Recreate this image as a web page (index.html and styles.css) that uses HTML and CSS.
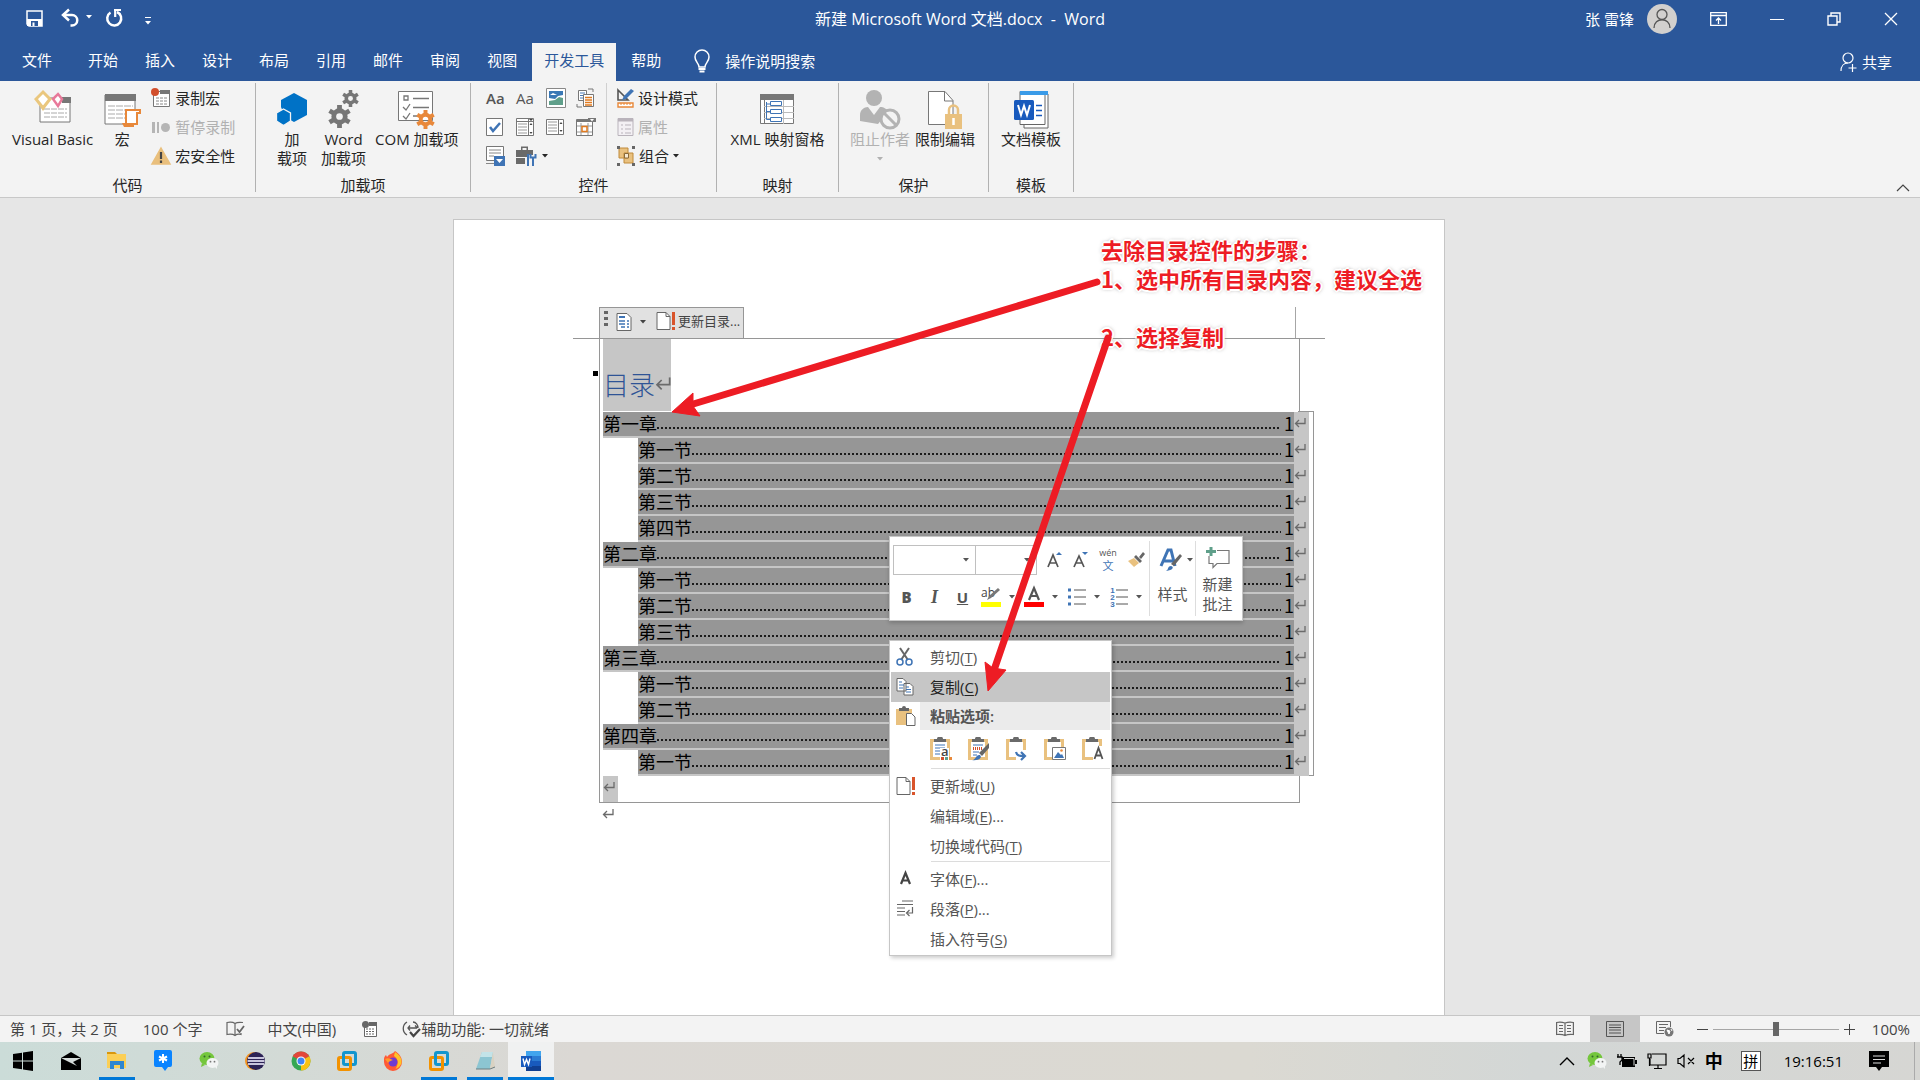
FILE: index.html
```html
<!DOCTYPE html>
<html lang="zh-CN">
<head>
<meta charset="utf-8">
<title>新建 Microsoft Word 文档.docx - Word</title>
<link rel="stylesheet" href="styles.css">
</head>
<body>
<svg class="defs" width="0" height="0" aria-hidden="true">
  <symbol id="caret" viewBox="0 0 6 4"><path d="M0 0h6L3 3.5z" fill="currentColor"/></symbol>
  <symbol id="ret" viewBox="0 0 12 10"><path d="M11 0v5.500H1.500M5 2L1.500 5.500 5 9" fill="none" stroke="#6b6b6b" stroke-width="1.300"/></symbol>
  <symbol id="clip" viewBox="0 0 22 24"><path d="M1.500 3.500h17v18h-17z" fill="#fff" stroke="#e9c17f" stroke-width="3"/><path d="M4 5V2h3a3 2.500 0 0 1 6 0h3v3z" fill="#6a6a6a"/></symbol>
  <symbol id="vm" viewBox="0 0 20 20"><rect x="6.500" y="1.500" width="12" height="12" rx="1.500" fill="none" stroke="#1296cf" stroke-width="3"/><rect x="1.500" y="6.500" width="12" height="12" rx="1.500" fill="none" stroke="#f39200" stroke-width="3"/><path d="M6.500 8V3" stroke="#1296cf" stroke-width="3"/></symbol>
  <symbol id="wechat" viewBox="0 0 20 20"><ellipse cx="8" cy="7.500" rx="7.500" ry="6.500" fill="#74c63c"/><path d="M3 12l-1 4 4-2z" fill="#74c63c"/><circle cx="5.500" cy="5.500" r="1" fill="#35682b"/><circle cx="10.500" cy="5.500" r="1" fill="#35682b"/><ellipse cx="13.500" cy="12" rx="6" ry="5" fill="#f2f4f4"/><path d="M16 16l2 2 0-4z" fill="#f2f4f4"/><circle cx="11.500" cy="10.700" r=".9" fill="#777"/><circle cx="15.500" cy="10.700" r=".9" fill="#777"/></symbol>
  <symbol id="gear" viewBox="-12 -12 24 24"><circle r="6" fill="none" stroke="currentColor" stroke-width="5"/><path d="M0-12v5M0 12V7M10.400-6l-4 2.300M-10.400 6l4-2.300M-10.400-6l4 2.300M10.400 6l-4-2.300" stroke="currentColor" stroke-width="5"/></symbol>
</svg>

<header class="top">
  <div class="titlebar">
    <div class="quick">
      <button aria-label="保存"><svg width="17" height="17" viewBox="0 0 17 17"><path d="M1 1h15v15H3l-2-2z" fill="none" stroke="#fff" stroke-width="1.500"/><path d="M1 9h15v7H1z" fill="#fff"/><path d="M5 11h7v5H5z" fill="#2b579a"/><path d="M6.500 12.500h2V16h-2z" fill="#fff"/></svg></button>
      <button class="undo" aria-label="撤消"><svg width="19" height="18" viewBox="0 0 19 18"><path d="M2 6h9a5 5 0 0 1 0 10.500H9.500" fill="none" stroke="#fff" stroke-width="2.500"/><path d="M8 .5L2 6l6 5.500" fill="none" stroke="#fff" stroke-width="2.500"/></svg><svg width="6" height="4"><use href="#caret"/></svg></button>
      <button aria-label="重复"><svg width="18" height="18" viewBox="0 0 18 18"><path d="M5.500 3.500A7 7 0 1 0 12 3" fill="none" stroke="#fff" stroke-width="2.500"/><path d="M9 1h7M10.200 0v8" fill="none" stroke="#fff" stroke-width="2.200"/></svg></button>
      <button class="custom" aria-label="自定义快速访问工具栏"><svg width="6" height="8" viewBox="0 0 6 8"><path d="M0 .5h6" stroke="#fff"/><path d="M0 4h6L3 7.500z" fill="#fff"/></svg></button>
    </div>
    <h1>新建 Microsoft Word 文档.docx&nbsp; -&nbsp; Word</h1>
    <div class="window">
      <span class="user">张 雷锋</span>
      <svg class="avatar" width="30" height="30" viewBox="0 0 30 30"><circle cx="15" cy="15" r="15" fill="#d2d0ce"/><circle cx="15" cy="10.500" r="5" fill="none" stroke="#555" stroke-width="1.300"/><path d="M7 24c0-11 16-11 16 0" fill="none" stroke="#555" stroke-width="1.300"/></svg>
      <button aria-label="功能区显示选项"><svg width="17" height="14" viewBox="0 0 17 14"><path d="M.7.700h15.600v12.600H.7zM1 3.500h15M8.500 12V6M6 8.500L8.500 6 11 8.500" fill="none" stroke="#fff" stroke-width="1.300"/></svg></button>
      <button aria-label="最小化"><svg width="14" height="14"><path d="M0 7.500h14" stroke="#fff"/></svg></button>
      <button aria-label="向下还原"><svg width="14" height="14" viewBox="0 0 14 14"><path d="M1 4h9v9H1zM4 4V1h9v9h-3" fill="none" stroke="#fff" stroke-width="1.400"/></svg></button>
      <button aria-label="关闭"><svg width="14" height="14" viewBox="0 0 14 14"><path d="M1 1l12 12M13 1L1 13" stroke="#fff" stroke-width="1.300"/></svg></button>
    </div>
  </div>
  <nav class="tabs">
    <button class="file">文件</button>
    <button>开始</button><button>插入</button><button>设计</button><button>布局</button><button>引用</button><button>邮件</button><button>审阅</button><button>视图</button><button class="active">开发工具</button><button>帮助</button>
    <button class="tell"><svg width="16" height="24" viewBox="0 0 16 24"><path d="M5 18c0-4-4-5-4-10a7 7 0 0 1 14 0c0 5-4 6-4 10z" fill="none" stroke="#fff" stroke-width="1.500"/><path d="M4.500 20h7M5.500 22.500h5" stroke="#fff" stroke-width="1.800"/></svg>操作说明搜索</button>
    <button class="share"><svg width="18" height="20" viewBox="0 0 18 20"><circle cx="8" cy="6" r="5" fill="none" stroke="#fff" stroke-width="1.200"/><path d="M1 19c0-5 3-8 7-8M12.500 12v8M8.500 16h8" fill="none" stroke="#fff" stroke-width="1.200"/></svg>共享</button>
  </nav>
</header>

<section class="ribbon">
  <div class="group g-code">
    <div class="items">
      <button class="big"><svg width="38" height="40" viewBox="0 0 38 40"><path d="M6 8h30v24H6z" fill="#fff" stroke="#777"/><path d="M28 7h9v6h-9z" fill="#777"/><path d="M10 19h23M10 23h23M10 27h23" stroke="#aaa" stroke-dasharray="6 1"/><path d="M9 2l7 7-7 9-7-9z" fill="#fff" stroke="#eac77e" stroke-width="3"/><path d="M2 9l7 12 7-12-7 7z" fill="#eac77e"/><path d="M24 4l4 5-4 7-5-7z" fill="#fff" stroke="#e8799a" stroke-width="2.500"/></svg>Visual Basic</button>
      <button class="big w40"><svg width="38" height="40" viewBox="0 0 38 40"><path d="M2 5h30v29H2z" fill="#fff" stroke="#777"/><path d="M2 4h31v7H2z" fill="#777"/><path d="M5 16h25M5 20h25M5 24h18M5 28h18" stroke="#aaa" stroke-dasharray="7 1"/><path d="M23 20h14v3h-3v11H23z" fill="#fff" stroke="#e8883a" stroke-width="2"/><path d="M19 33h12v4H21z" fill="#e8883a"/></svg>宏</button>
      <div class="list">
        <button><svg width="20" height="20" viewBox="0 0 20 20"><path d="M2.500 3.500h16v15h-16z" fill="#fff" stroke="#777"/><path d="M9 2h10v4H9z" fill="#777"/><path d="M5 10h11M5 13h11M5 16h11" stroke="#888" stroke-dasharray="3 1"/><circle cx="4" cy="4" r="4" fill="#d24f2c"/></svg>录制宏</button>
        <button disabled><svg width="20" height="20" viewBox="0 0 20 20"><path d="M1 5h3v11H1zM6 5h2v11H6z" fill="#b5b5b5"/><circle cx="14.500" cy="10.500" r="4.500" fill="#b5b5b5"/></svg>暂停录制</button>
        <button><svg width="20" height="20" viewBox="0 0 20 20"><path d="M10 2l9 16H1z" fill="#e9bf7c" stroke="#e9bf7c" stroke-width="1.500"/><path d="M10 6v7M10 14.500V17" stroke="#444" stroke-width="2.200"/></svg>宏安全性</button>
      </div>
    </div>
    <h2>代码</h2>
  </div>
  <div class="group g-addin">
    <div class="items">
      <button class="big w40"><svg width="32" height="40" viewBox="0 0 32 40"><path d="M18 3l13 7v15l-13 7-9-5-4-10V10z" fill="#0072c6"/><path d="M7.500 19l7 4v8l-7 4.500-7-4.500v-8z" fill="#0072c6" stroke="#f3f3f3" stroke-width="1.300"/></svg>加<br>载项</button>
      <button class="big"><svg width="34" height="40" viewBox="0 0 34 40"><g color="#767676"><use href="#gear" x="15" y="0" width="17" height="17"/><use href="#gear" x="1" y="15" width="23" height="23"/></g></svg>Word<br>加载项</button>
      <button class="big"><svg width="38" height="40" viewBox="0 0 38 40"><path d="M.5 1.500h34v29H.5z" fill="#fff" stroke="#777"/><path d="M6 6h4v4H6zM15 8.500h16M5 17l3 3 4-6M15 17.500h16M5 26l3 3 4-6M15 26h6" fill="none" stroke="#777" stroke-width="1.300"/><use href="#gear" x="18" y="20" width="19" height="19" color="#e8883a"/></svg>COM 加载项</button>
    </div>
    <h2>加载项</h2>
  </div>
  <div class="group g-ctl">
    <div class="items">
      <div class="grid">
        <button class="aa bold">Aa</button><button class="aa">Aa</button>
        <button aria-label="图片"><svg width="20" height="20" viewBox="0 0 20 20"><path d="M.5.500h19v19H.5z" fill="#fff" stroke="#888"/><path d="M3 3h14v4l-5 1-3 3-6-1z" fill="#3a78b5"/><path d="M3 17v-4l6-1 4-3 4 1v7z" fill="#5f9f8a"/><path d="M4 7l3-2 4 2z" fill="#fff"/></svg></button>
        <button aria-label="构建基块"><svg width="20" height="22" viewBox="0 0 20 22"><path d="M2.500 3.500h8v10h-8z" fill="#fff" stroke="#777"/><path d="M4 6h5M4 8.500h5M4 11h4" stroke="#4a7ab5"/><path d="M7.500 7.500h10v12h-10z" fill="#fff" stroke="#777"/><path d="M9 10.500h7M9 13h7M9 15.500h7M9 18h7" stroke="#e07a1f" stroke-width="1.400"/><path d="M12 2h5v3M1 17v3h5" fill="none" stroke="#777"/></svg></button>
        <button aria-label="复选框"><svg width="18" height="20" viewBox="0 0 18 20"><path d="M.5 1.500h16v17H.5z" fill="#fff" stroke="#777"/><path d="M4 10l3 4 7-8" fill="none" stroke="#3f74b5" stroke-width="2.500"/></svg></button>
        <button aria-label="组合框"><svg width="18" height="20" viewBox="0 0 18 20"><path d="M.5 1.500h17v17H.5zM12.500 1v18M.5 4.500h17" fill="#fff" stroke="#777"/><path d="M2 7h9M2 10h9M2 13h9M2 16h9" stroke="#999"/><path d="M13 2h4l-2 2zM13.500 8h3L15 6zM13.500 15h3L15 17z" fill="#444"/></svg></button>
        <button aria-label="下拉列表"><svg width="18" height="20" viewBox="0 0 18 20"><path d="M.5 2.500h17v15H.5zM12.500 2v16" fill="#fff" stroke="#777"/><path d="M2 5h9M2 8h9M2 11h9M2 14h9" stroke="#999"/><path d="M13.500 7h3L15 5zM13.500 13h3L15 15z" fill="#444"/></svg></button>
        <button aria-label="日期选取器"><svg width="20" height="20" viewBox="0 0 20 20"><path d="M.5 2.500h16v16H.5z" fill="#fff" stroke="#777"/><path d="M.5 4h16" stroke="#777" stroke-width="2"/><path d="M12 1h8v4h-8z" fill="#777"/><path d="M14 2h4l-2 2.500z" fill="#fff"/><path d="M1 9h15M1 15h15M5 6v12M12 6v12" stroke="#999"/><path d="M6 9.500h5v5H6z" fill="#fff" stroke="#e07a1f" stroke-width="1.500"/></svg></button>
        <button aria-label="重复分区"><svg width="20" height="22" viewBox="0 0 20 22"><path d="M.5 1.500h17v14H.5z" fill="#fff" stroke="#777"/><path d="M3 5h12M3 8h12M3 11h5M0 18.500h8" stroke="#888"/><path d="M8 11h11v10H8z" fill="#3f74b5"/><path d="M10 14h7l-3.500 4z" fill="#fff"/></svg></button>
        <button class="drop" aria-label="旧式工具"><svg width="20" height="22" viewBox="0 0 20 22"><path d="M0 5h17v5h-6v2H0zM0 13h9v6H0zM5 5V1.500h7V5h-1.500V3h-4v2z" fill="#6a6a6a"/><path d="M12 9v12M17 13v8M14.500 9v3.500h5V9" fill="none" stroke="#3f74b5" stroke-width="2"/></svg><svg width="6" height="4"><use href="#caret"/></svg></button>
      </div>
      <div class="list divided">
        <button><svg width="17" height="20" viewBox="0 0 17 20"><path d="M1 2l10 10H1z" fill="none" stroke="#555" stroke-width="1.600"/><path d="M5 12l2-4 7-7 3 2-8 8z" fill="#3f74b5"/><path d="M1 15h15v4H1z" fill="#fff" stroke="#e8883a" stroke-width="1.400"/><path d="M4 15v2M7 15v2M10 15v2M13 15v2" stroke="#e8883a"/></svg>设计模式</button>
        <button disabled><svg width="17" height="20" viewBox="0 0 17 20"><path d="M1 1.500h15v17H1z" fill="#f3f0f4" stroke="#b9b3bb"/><path d="M1 3h15" stroke="#b9b3bb" stroke-width="3"/><path d="M4 8h2M4 12h2M4 16h2M8 8h6M8 12h6M8 16h6" stroke="#b9b3bb"/></svg>属性</button>
        <button><svg width="18" height="20" viewBox="0 0 18 20"><path d="M2 2h9v10H2zM7 7h9v10H7z" fill="#e9c17f" stroke="#c08a3a"/><path d="M7.500 7.500h4v4.500h-4z" fill="#f7ead2" stroke="#8a6a3a"/><path d="M0 0h3v3H0zM15 0h3v3h-3zM0 17h3v3H0zM15 17h3v3h-3z" fill="#666"/></svg>组合<svg width="6" height="4"><use href="#caret"/></svg></button>
      </div>
    </div>
    <h2>控件</h2>
  </div>
  <div class="group g-xml">
    <div class="items"><button class="big"><svg width="36" height="40" viewBox="0 0 36 40"><path d="M1.500 4.500h33v29h-33z" fill="#fff" stroke="#777"/><path d="M1 4h34v6H1z" fill="#777"/><path d="M5.500 4v30" stroke="#777"/><path d="M24.500 10v24M5 16.500h30M5 22.500h30M5 28.500h30" stroke="#bbb"/><path d="M7.500 12v17.500H11M7.500 14h4M7.500 21.500h4" fill="none" stroke="#3f74b5"/><path d="M11.500 11.500h11v4h-11zM11.500 19.500h11v4h-11zM11.500 27.500h11v4h-11z" fill="#fff" stroke="#3f74b5"/></svg>XML 映射窗格</button></div>
    <h2>映射</h2>
  </div>
  <div class="group g-protect">
    <div class="items">
      <button class="big" disabled><svg width="42" height="40" viewBox="0 0 42 40"><ellipse cx="15" cy="8" rx="8" ry="8" fill="#b3b3b3"/><path d="M1 31V25c0-5 4-8 8-8l6 8 6-8c4 0 7 2 8 5l-10 12z" fill="#b3b3b3"/><circle cx="31" cy="29" r="9" fill="#f3f3f3" stroke="#b3b3b3" stroke-width="3"/><path d="M25 23l12 12" stroke="#b3b3b3" stroke-width="3"/></svg>阻止作者<span><svg width="6" height="4"><use href="#caret"/></svg></span></button>
      <button class="big"><svg width="36" height="40" viewBox="0 0 36 40"><path d="M1.500 1.500H18l8 9v24h-24.500z" fill="#fff" stroke="#777"/><path d="M17.500 1.500V11H26" fill="none" stroke="#777"/><path d="M22 24v-4a4.500 4.500 0 0 1 9 0v4" fill="none" stroke="#e9c17f" stroke-width="2.500"/><path d="M18 24h17v15H18z" fill="#e9c17f"/><path d="M26.500 28v7" stroke="#fff" stroke-width="2.500"/></svg>限制编辑</button>
    </div>
    <h2>保护</h2>
  </div>
  <div class="group g-tpl">
    <div class="items"><button class="big"><svg width="36" height="40" viewBox="0 0 36 40"><path d="M11 4h24v34H11z" fill="#fff" stroke="#666"/><path d="M7 1.500h25v33H7z" fill="#fff" stroke="#666"/><path d="M7 1h28v4H7z" fill="#3a9be8"/><path d="M23 15.500h6M23 20.500h6M23 25.500h6" stroke="#185abd" stroke-width="1.500"/><rect x="1" y="10" width="20" height="20" rx="1.500" fill="#185abd"/><path d="M5 15l3 10 3-9 3 9 3-10" fill="none" stroke="#fff" stroke-width="2"/></svg>文档模板</button></div>
    <h2>模板</h2>
  </div>
  <button class="collapse" aria-label="折叠功能区"><svg width="14" height="8" viewBox="0 0 14 8"><path d="M1 7l6-6 6 6" fill="none" stroke="#444" stroke-width="1.200"/></svg></button>
</section>

<main class="canvas">
  <article class="paper">
    <div class="margin-line">
      <div class="toc-bar">
        <svg width="4" height="16" viewBox="0 0 4 16"><path d="M0 0h4v3H0zM0 6h4v3H0zM0 12h4v3H0z" fill="#666"/></svg>
        <button aria-label="目录"><svg width="16" height="20" viewBox="0 0 16 20"><path d="M1 1.500h10l4 4v13H1z" fill="#fff" stroke="#666"/><path d="M3 5h6" stroke="#3f74b5" stroke-width="2"/><path d="M3 9h6M3 12h6M5 15h4M11 9h2M11 12h2M11 15h2" stroke="#3f74b5" stroke-width="1.300"/></svg><svg width="6" height="4"><use href="#caret"/></svg></button>
        <button class="upd"><svg width="20" height="20" viewBox="0 0 20 20"><path d="M1 1.500h9l4 4v13H1z" fill="#fff" stroke="#666"/><path d="M10 1.500v4h4" fill="none" stroke="#666"/><path d="M16 1h3v13h-3zM16 16h3v3h-3z" fill="#d9542b"/></svg>更新目录...</button>
      </div>
      <i class="corner"></i>
    </div>
    <div class="toc-box">
      <div class="head"><h2>目录<svg width="16" height="14" viewBox="0 0 12 10"><use href="#ret"/></svg></h2></div>
      <ol class="rows">
        <li><a href="#"><b>第一章</b><i></i>1</a><svg width="12" height="10"><use href="#ret"/></svg></li>
        <li class="sub"><a href="#"><b>第一节</b><i></i>1</a><svg width="12" height="10"><use href="#ret"/></svg></li>
        <li class="sub"><a href="#"><b>第二节</b><i></i>1</a><svg width="12" height="10"><use href="#ret"/></svg></li>
        <li class="sub"><a href="#"><b>第三节</b><i></i>1</a><svg width="12" height="10"><use href="#ret"/></svg></li>
        <li class="sub"><a href="#"><b>第四节</b><i></i>1</a><svg width="12" height="10"><use href="#ret"/></svg></li>
        <li><a href="#"><b>第二章</b><i></i>1</a><svg width="12" height="10"><use href="#ret"/></svg></li>
        <li class="sub"><a href="#"><b>第一节</b><i></i>1</a><svg width="12" height="10"><use href="#ret"/></svg></li>
        <li class="sub"><a href="#"><b>第二节</b><i></i>1</a><svg width="12" height="10"><use href="#ret"/></svg></li>
        <li class="sub"><a href="#"><b>第三节</b><i></i>1</a><svg width="12" height="10"><use href="#ret"/></svg></li>
        <li><a href="#"><b>第三章</b><i></i>1</a><svg width="12" height="10"><use href="#ret"/></svg></li>
        <li class="sub"><a href="#"><b>第一节</b><i></i>1</a><svg width="12" height="10"><use href="#ret"/></svg></li>
        <li class="sub"><a href="#"><b>第二节</b><i></i>1</a><svg width="12" height="10"><use href="#ret"/></svg></li>
        <li><a href="#"><b>第四章</b><i></i>1</a><svg width="12" height="10"><use href="#ret"/></svg></li>
        <li class="sub"><a href="#"><b>第一节</b><i></i>1</a><svg width="12" height="10"><use href="#ret"/></svg></li>
      </ol>
      <div class="tail"><span><svg width="12" height="10"><use href="#ret"/></svg></span></div>
    </div>
    <p class="after"><svg width="12" height="10"><use href="#ret"/></svg></p>
    <i class="bullet"></i>

    <div class="mini">
      <div class="tools">
        <div class="row">
          <div class="combos"><button class="font" aria-label="字体"><svg width="6" height="4"><use href="#caret"/></svg></button><button class="size" aria-label="字号"><svg width="6" height="4"><use href="#caret"/></svg></button></div>
          <button aria-label="增大字号"><svg width="16" height="20" viewBox="0 0 16 20"><path d="M1 17L6 5l5 12M3 13h6" fill="none" stroke="#555" stroke-width="1.700"/><path d="M9 5l3-3 3 3z" fill="#3f74b5"/></svg></button>
          <button aria-label="减小字号"><svg width="16" height="20" viewBox="0 0 16 20"><path d="M1 17L6 6l5 11M3 13h6" fill="none" stroke="#555" stroke-width="1.700"/><path d="M9 2l3 3 3-3z" fill="#3f74b5"/></svg></button>
          <button class="pinyin"><small>wén</small><small>文</small></button>
          <button aria-label="格式刷"><svg width="18" height="16" viewBox="0 0 18 16"><path d="M1 9l6-3 5 5-5 4z" fill="#e9c17f"/><path d="M7 5l2-2 6 6-2 2zM12 5l4-5 2 2-4 5z" fill="#666"/></svg></button>
        </div>
        <div class="row fmt">
          <button class="ch"><b>B</b></button><button class="ch"><i>I</i></button><button class="ch"><u>U</u></button>
          <button class="pair" aria-label="突出显示"><svg width="20" height="22" viewBox="0 0 20 22"><text x="0" y="11" font-size="12" fill="#444">ab</text><path d="M6 14l2-4L17 2l2 2-9 8z" fill="#777"/><path d="M0 16h20v5H0z" fill="#ff0"/></svg><svg width="6" height="4"><use href="#caret"/></svg></button>
          <button class="pair" aria-label="字体颜色"><svg width="20" height="22" viewBox="0 0 20 22"><path d="M5 14L10 2l5 12M7 10h6" fill="none" stroke="#555" stroke-width="2.200"/><path d="M0 16h20v5H0z" fill="red"/></svg><svg width="6" height="4"><use href="#caret"/></svg></button>
          <button class="pair" aria-label="项目符号"><svg width="19" height="18" viewBox="0 0 19 18"><path d="M7 2h12M7 9h12M7 16h12" stroke="#555"/><path d="M1 .5h3v3H1zM1 7.500h3v3H1zM1 14.500h3v3H1z" fill="#3f74b5"/></svg><svg width="6" height="4"><use href="#caret"/></svg></button>
          <button class="pair numbered" aria-label="编号"><span><em>1</em><em>2</em><em>3</em></span><svg width="12" height="18" viewBox="0 0 12 18"><path d="M0 2h12M0 9h12M0 16h12" stroke="#555"/></svg><svg width="6" height="4"><use href="#caret"/></svg></button>
        </div>
      </div>
      <button class="tall"><span><svg width="24" height="24" viewBox="0 0 24 24"><path d="M2 18L9 2h3l4 16M5 13h9" fill="none" stroke="#3f74b5" stroke-width="3"/><path d="M12 16l9-10 2 2-8 10z" fill="#666"/><path d="M6 23c4 0 2-5 6-5 4 1 1 5-6 5z" fill="#3f74b5"/></svg><svg width="6" height="4"><use href="#caret"/></svg></span>样式</button>
      <button class="tall note"><span><svg width="24" height="22" viewBox="0 0 24 22"><path d="M11 3.500h12v13H11l-4 4v-4H3V9" fill="none" stroke="#777" stroke-width="1.200"/><path d="M5 0v9M0 4.500h10" stroke="#5f9f8a" stroke-width="3"/></svg></span>新建<br>批注</button>
    </div>

    <div class="menu">
      <button><svg width="18" height="20" viewBox="0 0 18 20"><path d="M4 1l8 12M13 1L5 13" stroke="#666" stroke-width="2"/><circle cx="4" cy="15" r="3" fill="none" stroke="#3f74b5" stroke-width="1.500"/><circle cx="13" cy="15" r="3" fill="none" stroke="#3f74b5" stroke-width="1.500"/></svg><span>剪切(<u>T</u>)</span></button>
      <button class="hot"><svg width="18" height="20" viewBox="0 0 18 20"><path d="M1 1.500h6l3 3V14H1zM8 6.500h6l3 3V18H8z" fill="#fff" stroke="#666"/><path d="M3 5h3M3 8h5M3 11h4M10 10h3M10 12.500h5M10 15h5" stroke="#3f74b5"/></svg><span>复制(<u>C</u>)</span></button>
      <div class="paste-head"><svg width="20" height="20" viewBox="0 0 20 20"><path d="M0 3h16v16H0z" fill="#e9c17f"/><path d="M3 5V2h3a2 2 0 0 1 4 0h3v3z" fill="#666"/><path d="M10.500 7.500h5l3.500 3.500v8.500h-8.500z" fill="#fff" stroke="#666"/></svg><span>粘贴选项:</span></div>
      <div class="paste">
        <button aria-label="使用目标主题"><svg width="22" height="24" viewBox="0 0 22 24"><use href="#clip" width="22" height="24"/><path d="M5 8h10M5 11h10M5 14h6M5 17h6" stroke="#3f74b5"/><path d="M10 11h9v12h-9z" fill="#fff"/><text x="11" y="19" font-size="13" font-weight="600" fill="#444">a</text><path d="M11 20h3v3h-3z" fill="#d24f2c"/><path d="M15 20h3v3h-3z" fill="#5f9f8a"/><path d="M19 20h3v3h-3z" fill="#e8883a"/></svg></button>
        <button aria-label="保留源格式"><svg width="22" height="24" viewBox="0 0 22 24"><use href="#clip" width="22" height="24"/><path d="M5 8h10M5 15h6M5 18h4" stroke="#3f74b5"/><path d="M5 11.500h9" stroke="#d24f2c" stroke-width="3" stroke-dasharray="1 1"/><path d="M11 16L21 6v5l-7 8z" fill="#666"/><path d="M4 23c4 0 4-6 8-5 3 3-2 6-8 5z" fill="#3f74b5"/></svg></button>
        <button aria-label="合并格式"><svg width="22" height="24" viewBox="0 0 22 24"><use href="#clip" width="22" height="24"/><path d="M10 13h10v10H10z" fill="#fff"/><path d="M10 15c1 4 4 4 8 4M15 15l4 4-4 4" fill="none" stroke="#3f74b5" stroke-width="2.200"/></svg></button>
        <button aria-label="图片"><svg width="22" height="24" viewBox="0 0 22 24"><use href="#clip" width="22" height="24"/><path d="M8.500 10.500h13v12h-13z" fill="#fff" stroke="#777"/><path d="M10 21l4-6 3 3 1-1 2 4z" fill="#3f74b5"/><circle cx="17.500" cy="13.500" r="1.300" fill="#e8883a"/></svg></button>
        <button aria-label="只保留文本"><svg width="22" height="24" viewBox="0 0 22 24"><use href="#clip" width="22" height="24"/><path d="M11 9h11v15H11z" fill="#fff"/><path d="M12.500 22l4-11 4 11M14 18.500h5" fill="none" stroke="#555" stroke-width="1.800"/></svg></button>
      </div>
      <hr>
      <button><svg width="20" height="20" viewBox="0 0 20 20"><path d="M1 1.500h9l4 4v13H1z" fill="#fff" stroke="#666"/><path d="M10 1.500v4h4" fill="none" stroke="#666"/><path d="M16 1h3v13h-3zM16 16h3v3h-3z" fill="#d9542b"/></svg><span>更新域(<u>U</u>)</span></button>
      <button><span>编辑域(<u>E</u>)...</span></button>
      <button><span>切换域代码(<u>T</u>)</span></button>
      <hr>
      <button><svg width="20" height="20" viewBox="0 0 20 20"><path d="M5 15L9.500 4l4.500 11M6.500 11.500h6" fill="none" stroke="#444" stroke-width="2.200"/></svg><span>字体(<u>F</u>)...</span></button>
      <button><svg width="18" height="20" viewBox="0 0 18 20"><path d="M6 2h11M1 5.500h16M1 9h8M1 12.500h8M1 16h8M16.500 8v6h-5M13.500 11l-3 3 3 3" fill="none" stroke="#666" stroke-width="1.200"/></svg><span>段落(<u>P</u>)...</span></button>
      <button><span>插入符号(<u>S</u>)</span></button>
    </div>

    <p class="steps">去除目录控件的步骤：<br>1、选中所有目录内容，建议全选<br><br>2、选择复制</p>
    <svg class="arrows" width="992" height="500" viewBox="0 0 992 500"><path d="M643 62L236 185M654 118L539 453" stroke="#ed1c24" stroke-width="7" stroke-linecap="round"/><path d="M218 192l21-19v13l7 10zM534 471l-3-29 8 6 13 2z" fill="#ed1c24" stroke="#ed1c24"/></svg>
  </article>
</main>

<footer class="status">
  <span class="s-page">第 1 页，共 2 页</span>
  <span class="s-count">100 个字</span>
  <svg class="s-proof" width="18" height="16" viewBox="0 0 18 16"><path d="M9 2.500v12M9 2.500C7 1 4 1 1 1.500v12c3-.5 6-.5 8 1 2-1.500 4-1.500 6-1V12M9 2.500C11 1 13 1 17 1.500" fill="none" stroke="#666" stroke-width="1.200"/><path d="M11 8l2.500 3L18 5" fill="none" stroke="#666" stroke-width="1.800"/></svg>
  <span class="s-lang">中文(中国)</span>
  <svg class="s-macro" width="16" height="16" viewBox="0 0 16 16"><path d="M2.500 3.500h12v12h-12z" fill="#fff" stroke="#666"/><path d="M7 1h8v4H7z" fill="#666"/><path d="M4 8h9M4 10.500h9M4 13h9" stroke="#666" stroke-dasharray="2 1"/><circle cx="3.500" cy="3.500" r="3.500" fill="#666"/></svg>
  <svg class="s-acc" width="19" height="18" viewBox="0 0 19 18"><path d="M5 2C0 5 0 12 5 15M6 8h9M8 5.500L6 8l2 2.500M13 5.500L15.500 8M11 2c3 0 5 3 5 6" fill="none" stroke="#555" stroke-width="1.300"/><path d="M8 12l3.500 4L18 9" fill="none" stroke="#444" stroke-width="2.200"/></svg>
  <span>辅助功能: 一切就绪</span>
  <div class="views">
    <button aria-label="阅读视图"><svg width="18" height="16" viewBox="0 0 18 16"><path d="M9 2v13M9 2C6 1 3 1 .6 1.500v12c3-.3 6-.3 8.400 1 2.500-1.300 5-1.300 8.400-1v-12C15 1 12 1 9 2zM3 4.500h4M3 7.500h4M3 10.500h4M11 4.500h4M11 7.500h4M11 10.500h4" fill="none" stroke="#666" stroke-width="1.200"/></svg></button>
    <button class="on" aria-label="页面视图"><svg width="18" height="16" viewBox="0 0 18 16"><path d="M.5.500h17v15H.5zM3 4h12M3 6.500h12M3 9h12M3 12h12" fill="none" stroke="#555"/></svg></button>
    <button aria-label="Web 版式视图"><svg width="18" height="16" viewBox="0 0 18 16"><path d="M8 12.500H.5V.5h14V6M3 3.500h9M3 6.500h7M3 9.500h5" fill="none" stroke="#666"/><circle cx="13" cy="11" r="4.500" fill="#777"/><path d="M11 9l3 1-1 3zM15 8l1 2" fill="#fff" stroke="#fff"/></svg></button>
  </div>
  <button class="zoom-step" aria-label="缩小"><svg width="11" height="11"><path d="M0 5.500h11" stroke="#444"/></svg></button>
  <input type="range" min="0" max="100" value="50" aria-label="显示比例">
  <button class="zoom-step" aria-label="放大"><svg width="11" height="11"><path d="M0 5.500h11M5.500 0v11" stroke="#444"/></svg></button>
  <span class="s-zoom">100%</span>
</footer>

<div class="taskbar">
  <button class="start" aria-label="开始"><svg width="20" height="20" viewBox="0 0 20 20"><path d="M0 3l9-1.300V9.500H0zM10 1.500L20 0v9.500H10zM0 10.500h9v7.800L0 17zM10 10.500h10V20l-10-1.500z"/></svg></button>
  <button aria-label="邮件"><svg width="20" height="18" viewBox="0 0 20 18"><path d="M0 6l10-6 10 6v12H0z"/><path d="M0 6h20l-8 4 4 4z" fill="#d5dcda"/></svg></button>
  <button class="run" aria-label="文件资源管理器"><svg width="20" height="20" viewBox="0 0 20 20"><path d="M0 1h8l2 2h-10z" fill="#d9970d"/><path d="M0 3h19v14H0z" fill="#fbcf56"/><path d="M3 10h14v8h-4v-4H7v4H3z" fill="#2f86d1"/></svg></button>
  <button aria-label="待办"><svg width="18" height="22" viewBox="0 0 18 22"><path d="M2 0h14a2 2 0 0 1 2 2v13a2 2 0 0 1-2 2h-2l-3 4-3-4H2a2 2 0 0 1-2-2V2a2 2 0 0 1 2-2z" fill="#0a84ff"/><path d="M9 4v9M5 6.500l8 4M13 6.500l-8 4" stroke="#fff" stroke-width="2"/></svg></button>
  <button aria-label="微信"><svg width="20" height="20"><use href="#wechat"/></svg></button>
  <button aria-label="Eclipse"><svg width="20" height="20" viewBox="0 0 20 20"><circle cx="9" cy="10" r="9" fill="#f39420"/><circle cx="11" cy="10" r="9" fill="#2c2255"/><path d="M3 7h16M2.500 10h17M3 13h16" stroke="#c8c4dc" stroke-width="1.800"/></svg></button>
  <button aria-label="Chrome"><svg width="20" height="20" viewBox="-10 -10 20 20"><circle r="9.500" fill="#35a853"/><path d="M0 0L-8.300-4.700A9.500 9.500 0 0 1 8.300-4.700z" fill="#e3463a"/><path d="M0 0L8.300-4.700A9.500 9.500 0 0 1 0 9.500z" fill="#fac213"/><circle r="4.500" fill="#fff"/><circle r="3.500" fill="#4285f4"/></svg></button>
  <button aria-label="VMware"><svg width="20" height="20"><use href="#vm"/></svg></button>
  <button aria-label="Firefox"><svg width="20" height="20" viewBox="0 0 20 20"><path d="M1 8c0-2 1-3 2-4l1 2c3-4 6-3 8-6 5 3 7 7 7 11a9 9 0 0 1-18 0z" fill="#ff5a36"/><path d="M12 1c5 3 7 7 6.500 11-1 3-3 5-6 6 4-6 2-11-1.500-13z" fill="#ffc328"/><circle cx="10" cy="11" r="4.500" fill="#6f3bd0"/><path d="M2 8c3-2 6 0 8 1-2 1-4 1-5 3z" fill="#ff9a2a"/></svg></button>
  <button class="run" aria-label="VMware Workstation"><svg width="20" height="20"><use href="#vm"/></svg></button>
  <button class="run" aria-label="记事本"><svg width="20" height="20" viewBox="0 0 20 20"><path d="M7 1h11l-3 17H1z" fill="#8cc5d2"/><path d="M7 1h11l-1 5H5z" fill="#c3e3e8"/><path d="M18 1l2 15-5 2z" fill="#d9d2c2"/><path d="M1 18h14l5-2" fill="none" stroke="#6d7d80"/></svg></button>
  <button class="run current" aria-label="Word"><svg width="20" height="20" viewBox="0 0 20 20"><path d="M5 0h15v5H5z" fill="#41a5ee"/><path d="M5 5h15v5H5z" fill="#2b7cd3"/><path d="M5 10h15v5H5z" fill="#185abd"/><path d="M5 15h15v5H5z" fill="#103f91"/><path d="M0 5h11v11H0z" fill="#185abd"/><path d="M2 7.500l1.500 6 2-5 2 5 1.500-6" fill="none" stroke="#fff" stroke-width="1.400"/></svg></button>
  <div class="tray">
    <svg width="16" height="9" viewBox="0 0 16 9"><path d="M1 8l7-7 7 7" fill="none" stroke="#000" stroke-width="1.400"/></svg>
    <svg width="20" height="20"><use href="#wechat"/></svg>
    <svg width="20" height="14" viewBox="0 0 20 14"><path d="M5 3h13v3h2v4h-2v3H5z"/><path d="M7 4.500h10v7" fill="none" stroke="#d5d8d6"/><path d="M0 3h5v3l-2 2v3M1 3V0M4 3V0" fill="none" stroke="#000" stroke-width="1.300"/></svg>
    <svg width="20" height="16" viewBox="0 0 20 16"><path d="M5 1h14v11H3V6M7 15.500h8M11 12v3M1 1h3v4H1zM2.500 5v8" fill="none" stroke="#000" stroke-width="1.200"/></svg>
    <svg width="18" height="14" viewBox="0 0 18 14"><path d="M1 4.500h2L7 1v12L3 9.500H1zM11 4l6 6M17 4l-6 6" fill="none" stroke="#000" stroke-width="1.200"/></svg>
    <span class="ime">中</span>
    <span class="pin">拼</span>
    <time>19:16:51</time>
    <svg width="20" height="20" viewBox="0 0 20 20"><path d="M0 0h20v16h-7l-3 4-3-4H0z"/><path d="M4 5h12M4 8.500h12M4 12h8" stroke="#ddd"/></svg>
    <i class="peek"></i>
  </div>
</div>
</body>
</html>
```
FILE: styles.css
```css
* { box-sizing: border-box; }

body {
  margin: 0;
  height: 100vh;
  display: flex;
  flex-direction: column;
  overflow: hidden;
  font: 15px/20px "Open Sans", "Noto Sans CJK SC", sans-serif;
  color: #262626;
  background: #e6e6e6;
}

button {
  display: flex;
  align-items: center;
  padding: 0;
  border: 0;
  background: none;
  color: inherit;
  font: inherit;
}

svg { display: block; flex: none; overflow: visible; }
.defs { position: absolute; }
h1, h2, p, ol { margin: 0; padding: 0; font: inherit; }

/* Title bar and tabs */
.top { background: #2b579a; color: #fff; }

.titlebar {
  height: 43px;
  display: grid;
  grid-template-columns: 1fr auto 1fr;
  align-items: center;
  padding-bottom: 5px;
}

.titlebar h1 { font-size: 16px; }
.quick { display: flex; align-items: center; gap: 18px; padding: 0 0 2px 26px; }
.quick .undo { gap: 6px; margin-right: -5px; }
.quick .undo svg + svg { margin-bottom: 2px; }
.quick .custom { margin: 6px 0 0 4px; }
.window { display: flex; align-items: center; justify-content: flex-end; gap: 43px; padding-right: 22px; }
.window .user { margin-right: -30px; }
.window .avatar { margin-right: -10px; }

.tabs { display: flex; height: 38px; gap: 3px; padding-left: 10px; }
.tabs button { padding: 0 12px 4px; }
.tabs .file { margin-right: 9px; }
.tabs .active { background: #f3f3f3; color: #2b579a; }
.tabs .tell { gap: 15px; padding-left: 18px; padding-bottom: 2px; }
.tabs .share { gap: 4px; margin-left: auto; padding: 0 28px 0 0; }

/* Ribbon */
.ribbon {
  flex: none;
  display: flex;
  height: 117px;
  padding: 2px 0 5px;
  background: #f3f3f3;
  border-bottom: 1px solid #c8c8c8;
}

.group { display: flex; flex-direction: column; border-right: 1px solid #b1b1b1; }
.group h2 { line-height: 14px; text-align: center; }
.items { flex: 1; display: flex; align-items: flex-start; white-space: nowrap; }
.g-code { width: 256px; }
.g-addin { width: 215px; }
.g-ctl { width: 246px; }
.g-xml { width: 122px; }
.g-protect { width: 150px; }
.g-tpl { width: 85px; }
.g-code .items { padding-left: 12px; gap: 9px; }
.g-addin .items { padding-left: 16px; gap: 9px; }
.g-ctl .items { padding-left: 15px; }
.g-xml .items, .g-tpl .items { justify-content: center; }
.g-protect .items { padding-left: 11px; gap: 5px; }

.big { flex-direction: column; padding-top: 7px; line-height: 19px; }
.big span { padding-top: 8px; }
.w40 { width: 40px; }
button:disabled { color: #b1b1b1; }

.list button { height: 29px; gap: 4px; }
.divided { border-left: 1px solid #d0d0d0; padding-left: 10px; }
.grid { display: grid; grid-template-columns: repeat(4, 30px); grid-auto-rows: 29px; width: 120px; }
.aa { color: #555; }
.bold { font-weight: 600; }
.drop { gap: 6px; }
.collapse { margin-left: auto; padding-right: 10px; align-items: flex-end; }

/* Document */
.canvas { flex: 1; min-height: 0; overflow: hidden; padding: 21px 22px 0 0; }

.paper {
  position: relative;
  width: 992px;
  height: 1400px;
  margin: 0 auto;
  padding: 87px 0 0 145px;
  border: 1px solid #c6c6c6;
  background: #fff;
}

.margin-line {
  display: flex;
  justify-content: space-between;
  width: 752px;
  margin-left: -26px;
  padding: 0 29px 0 26px;
  border-bottom: 1px solid #969696;
}

.corner { width: 1px; background: #a6a6a6; }

.toc-bar {
  display: flex;
  align-items: flex-start;
  height: 31px;
  padding: 3px 3px 3px 4px;
  border: 1px solid #969696;
  border-bottom: 0;
  background: #e1e1e1;
  color: #444;
  font-size: 13px;
  line-height: 18px;
}

.toc-bar button { gap: 8px; margin: 1px 0 0 8px; }
.toc-bar .upd { gap: 2px; margin: 0 0 0 10px; }

.toc-box { width: 715px; border-left: 1px solid #969696; }
.head { width: 700px; height: 72px; padding-left: 3px; border-right: 1px solid #969696; }

.head h2 {
  display: flex;
  align-items: center;
  width: 68px;
  height: 72px;
  padding-top: 18px;
  background: #c6c6c6;
  color: #2f5496;
  font: 300 26px/40px "Noto Sans CJK SC", sans-serif;
  white-space: nowrap;
}

.rows {
  padding: 1px 0 0 3px;
  border-right: 1px solid #969696;
  background:
    linear-gradient(#969696, #969696) right top / 15px 1px no-repeat,
    linear-gradient(#969696, #969696) right bottom / 15px 1px no-repeat;
  font: 18px/22px "Noto Sans CJK SC", sans-serif;
  list-style: none;
}

.rows li { display: flex; height: 26px; margin-right: 4px; background: #c6c6c6; }
.rows .sub { margin-left: 35px; }
.rows a { flex: 1; display: flex; height: 24px; background: #969696; color: #000; text-decoration: none; }
.rows b { font-weight: inherit; }

.rows i {
  flex: 1;
  height: 2px;
  margin: 15px 3px 0 0;
  background: repeating-linear-gradient(90deg, #1a1a1a 0 2px, transparent 2px 4px);
}

.rows svg { margin: 6px 3px 0 0; }
.tail { width: 700px; height: 27px; padding-left: 3px; border: solid #969696; border-width: 0 1px 1px 0; }
.tail span { display: block; width: 15px; height: 26px; padding-top: 6px; background: #c6c6c6; }
.after { padding: 6px 0 0 3px; }
.bullet { position: absolute; left: 139px; top: 151px; width: 5px; height: 5px; background: #000; }

/* Floating toolbar */
.mini {
  position: absolute;
  left: 435px;
  top: 316px;
  display: flex;
  width: 354px;
  height: 85px;
  padding: 4px 3px;
  border: 1px solid #c6c6c6;
  background: #fff;
  color: #555;
  box-shadow: 0 2px 4px rgba(0, 0, 0, .2);
}

.tools { flex: 1; display: flex; flex-direction: column; justify-content: space-between; }
.row { display: flex; align-items: center; gap: 10px; padding-top: 4px; }
.combos { display: flex; }
.combos button { height: 30px; justify-content: flex-end; padding-right: 6px; border: 1px solid #c0c0c0; }
.font { width: 83px; }
.combos .size { width: 62px; margin-left: -1px; }
.pinyin { flex-direction: column; width: 18px; }
.pinyin small { font-size: 9px; line-height: 12px; }
.pinyin small + small { font-size: 11px; line-height: 14px; color: #3f74b5; }
.fmt { gap: 9px; height: 36px; padding: 0 0 2px 4px; }
.ch { justify-content: center; width: 19px; font-weight: 700; }
.ch i { font-family: "Liberation Serif", serif; font-size: 18px; }
.pair { gap: 8px; }
.numbered span { display: flex; flex-direction: column; width: 7px; margin-right: -8px; }
.numbered em { color: #3f74b5; font: 700 8px/7px "Liberation Sans", sans-serif; }
.tall { flex-direction: column; width: 46px; border-left: 1px solid #ddd; }
.tall span { display: flex; align-items: flex-start; gap: 4px; height: 43px; padding: 7px 0 0 6px; }
.tall span svg + svg { margin-top: 10px; }
.note { width: 44px; }
.note span { height: 33px; padding: 6px 0 0; }

/* Context menu */
.menu {
  position: absolute;
  left: 435px;
  top: 420px;
  width: 223px;
  padding: 1px;
  border: 1px solid #c6c6c6;
  background: #fff;
  color: #555;
  box-shadow: 2px 2px 4px rgba(0, 0, 0, .2);
}

.menu > button { width: 100%; height: 30px; padding-left: 5px; }
.menu > button span { margin-left: auto; width: 180px; text-align: left; }
.menu u { text-underline-offset: 2px; }
.menu .hot { background: #c6c6c6; color: #222; }
.paste-head { display: flex; align-items: center; height: 28px; padding-left: 5px; font-weight: 600; }
.paste-head span { flex: 1; margin-left: 4px; padding: 4px 10px; background: #ebebeb; }
.paste { display: flex; gap: 16px; height: 38px; padding-left: 39px; }
.menu hr { height: 1px; margin: 0 0 2px 40px; border: 0; background: #dcdcdc; }

/* Red notes over the page */
.steps {
  position: absolute;
  left: 647px;
  top: 15px;
  color: #ed1c24;
  font: 700 22px/29px "Noto Sans CJK SC", sans-serif;
  white-space: nowrap;
  text-shadow: 2px 0 #fff, -2px 0 #fff, 0 2px #fff, 0 -2px #fff, 1px 1px #fff, -1px -1px #fff, 0 0 4px #666;
}

.arrows { position: absolute; left: 0; top: 0; pointer-events: none; }

/* Status bar */
.status {
  flex: none;
  display: flex;
  align-items: center;
  height: 27px;
  padding: 0 10px;
  border-top: 1px solid #c6c6c6;
  background: #f3f3f3;
  color: #444;
}

.s-page { margin-right: 25px; }
.s-count { margin-right: 24px; }
.s-proof, .s-lang { margin-right: 23px; }
.s-macro { margin: 0 24px 0 3px; }
.s-zoom { margin-left: 17px; }
.views { display: flex; height: 100%; margin: 0 7px 0 auto; }
.views button { justify-content: center; width: 50px; }
.views .on { background: #c6c6c6; }
.zoom-step { width: 11px; }

input[type="range"] { appearance: none; width: 126px; height: 14px; margin: 0 5px; background: linear-gradient(#a6a6a6, #a6a6a6) center / 100% 1px no-repeat; }
input[type="range"]::-webkit-slider-thumb { appearance: none; width: 6px; height: 14px; background: #666; }

/* Taskbar */
.taskbar {
  flex: none;
  display: flex;
  height: 38px;
  background: linear-gradient(90deg, #cbdcd8, #dbd8d4 30%, #dbd9d2 65%, #d3d7d6 80%, #d6d6d3);
}

.taskbar button { justify-content: center; width: 46px; border: solid transparent; border-width: 0 5px; }
.taskbar .start { margin-right: 2px; }
.taskbar .run { background: linear-gradient(#0078d7, #0078d7) bottom / 100% 3px no-repeat padding-box; }
.taskbar .current { background-color: #f0f1f1; border-width: 0; }
.tray { display: flex; align-items: center; gap: 10px; margin-left: auto; color: #000; }
.tray > :first-child { margin-right: 2px; }
.ime { font-size: 18px; font-weight: 600; }
.pin { width: 20px; margin-left: 8px; border: 1px solid #555; background: #fff; line-height: 18px; text-align: center; }
.tray time { margin: 0 16px 0 13px; }
.peek { width: 6px; height: 38px; margin-left: 15px; border-left: 1px solid #aaa; }
```
